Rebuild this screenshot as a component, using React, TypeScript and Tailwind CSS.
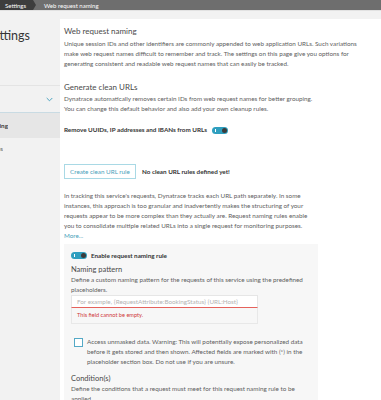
const Toggle = () => (
  <span className="relative inline-block h-[7px] w-[16px] shrink-0 rounded-full bg-[#2f9fbf]">
    <span className="absolute left-[3px] top-[2px] h-[3px] w-px bg-white" />
    <span className="absolute right-[1px] top-[1px] h-[5px] w-[5px] rounded-full bg-[#3b3b3b]" />
  </span>
);

const Line = ({ children, className = "" }: { children: React.ReactNode; className?: string }) => (
  <div className={`h-[10px] whitespace-nowrap leading-[10px] ${className}`}>{children}</div>
);

export default function App() {
  return (
    <div className="h-[400px] w-[381px] overflow-hidden bg-[#f2f2f2] font-['Lato',sans-serif] text-[6.3px] text-[#5e5e5e]">
      {/* breadcrumb */}
      <div className="flex h-[10px] items-center bg-[#6e6e6e] text-[6px] text-white">
        <div className="flex h-full w-[36px] items-center bg-[#3d3d3d] pl-[5px] [clip-path:polygon(0_0,33px_0,36px_50%,33px_100%,0_100%)]">
          Settings
        </div>
        <span className="ml-[8px]">Web request naming</span>
      </div>
      <div className="h-[9px] border-t border-[#e2e2e2]" />

      <div className="flex">
        {/* sidebar */}
        <aside className="w-[60px] shrink-0 overflow-hidden">
          <div className="flex h-[66px] w-[30px] justify-end overflow-hidden pt-[9px]">
            <span className="whitespace-nowrap text-[12.5px] leading-[16px] text-[#353535]">Settings</span>
          </div>
          <div className="flex h-[27px] items-center justify-end border-t border-[#e4e4e4] pr-[7px]">
            <svg width="7" height="5" viewBox="0 0 7 5" fill="none">
              <path d="M0.7 1 L3.5 3.8 L6.3 1" stroke="#4ba3c0" strokeWidth="1" />
            </svg>
          </div>
          <div className="flex h-[26px] items-center border-t border-[#c9dbe3] bg-[#e6e6e6]">
            <div className="flex w-[8px] justify-end overflow-hidden">
              <span className="whitespace-nowrap font-bold text-[#3a3a3a]">Web request naming</span>
            </div>
          </div>
          <div className="flex h-[22px] w-[3px] items-center justify-end overflow-hidden">
            <span className="whitespace-nowrap">Request attributes</span>
          </div>
        </aside>

        {/* main */}
        <main className="flex-1 bg-white pl-[4px] pt-[6px]">
          <div className="h-[12px] text-[8px] leading-[12px] text-[#4a4a4a]">Web request naming</div>
          <div className="mt-[2px]">
            <Line>Unique session IDs and other identifiers are commonly appended to web application URLs. Such variations</Line>
            <Line>make web request names difficult to remember and track. The settings on this page give you options for</Line>
            <Line>generating consistent and readable web request names that can easily be tracked.</Line>
          </div>

          <div className="mt-[12px] h-[12px] text-[8px] leading-[12px] text-[#4a4a4a]">Generate clean URLs</div>
          <div className="mt-px">
            <Line>Dynatrace automatically removes certain IDs from web request names for better grouping.</Line>
            <Line>You can change this default behavior and also add your own cleanup rules.</Line>
          </div>

          <div className="mt-[10px] flex h-[12px] items-center gap-[5px] font-bold text-[#333]">
            <span>Remove UUIDs, IP addresses and IBANs from URLs</span>
            <Toggle />
          </div>

          <div className="mt-[28px] flex h-[15px] items-center">
            <button className="h-[15px] w-[72px] border border-[#a9d9e5] bg-white text-[6.3px] text-[#4aa0ba]">
              Create clean URL rule
            </button>
            <span className="ml-[6px] font-bold text-[#333]">No clean URL rules defined yet!</span>
          </div>

          <div className="mt-[12px]">
            <Line>In tracking this service's requests, Dynatrace tracks each URL path separately. In some</Line>
            <Line>instances, this approach is too granular and inadvertently makes the structuring of your</Line>
            <Line>requests appear to be more complex than they actually are. Request naming rules enable</Line>
            <Line>you to consolidate multiple related URLs into a single request for monitoring purposes.</Line>
            <Line className="text-[#4aa0ba]">More...</Line>
          </div>

          <section className="mt-[3px] w-[254px] bg-[#f7f7f7] px-[7px] pt-[6px]">
            <div className="flex h-[11px] items-center gap-[4px] font-bold text-[#333]">
              <Toggle />
              <span>Enable request naming rule</span>
            </div>
            <div className="mt-[4px] h-[10px] text-[7.5px] leading-[10px] text-[#4a4a4a]">Naming pattern</div>
            <Line>Define a custom naming pattern for the requests of this service using the predefined</Line>
            <Line>placeholders.</Line>
            <div className="w-[187px]">
              <div className="flex h-[13px] items-center border border-b-[#e5625c] border-x-[#e6e6e6] border-t-[#e6e6e6] bg-white pl-[5px] text-[#b3b3b3]">
                For example, {"{RequestAttribute:BookingStatus}"} {"{URL:Host}"}
              </div>
              <div className="flex h-[16px] items-center border border-t-0 border-[#e8e8e8] pl-[5px] text-[5.6px] text-[#cf3a3a]">
                This field cannot be empty.
              </div>
            </div>

            <div className="mt-[13px] flex gap-[4px] pl-[3px]">
              <span className="mt-px h-[9px] w-[9px] shrink-0 border border-[#54a9c6] bg-white" />
              <div>
                <Line>Access unmasked data. Warning: This will potentially expose personalized data</Line>
                <Line>before it gets stored and then shown. Affected fields are marked with (*) in the</Line>
                <Line>placeholder section box. Do not use if you are unsure.</Line>
              </div>
            </div>

            <div className="mt-[7px] h-[10px] text-[7.5px] leading-[10px] text-[#4a4a4a]">Condition(s)</div>
            <Line>Define the conditions that a request must meet for this request naming rule to be</Line>
            <Line>applied.</Line>
          </section>
        </main>
      </div>
    </div>
  );
}
